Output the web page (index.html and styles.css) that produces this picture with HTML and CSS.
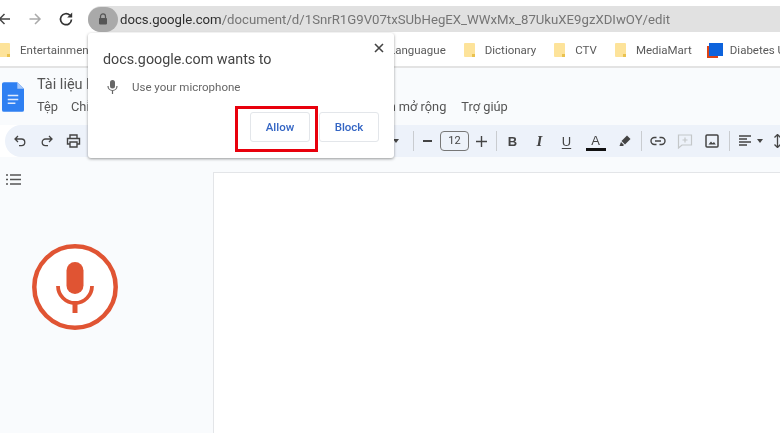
FILE: index.html
```html
<!DOCTYPE html>
<html lang="vi">
<head>
<meta charset="utf-8">
<title>Tài liệu</title>
<link rel="stylesheet" href="styles.css">
</head>
<body>
<div class="app">
  <header class="nav">
    <svg class="nav-ic" width="16" height="16" viewBox="0 0 16 16"><path d="M13 8H2.500M7.500 3 2.500 8l5 5" fill="none" stroke="#444" stroke-width="1.500"/></svg>
    <svg class="nav-ic" width="16" height="16" viewBox="0 0 16 16"><path d="M2.500 8H13M8 3l5 5-5 5" fill="none" stroke="#aaa" stroke-width="1.500"/></svg>
    <svg class="nav-ic" width="16" height="16" viewBox="0 0 16 16"><path d="M13.500 8.500A5.500 5.500 0 1 1 11.800 4.200" fill="none" stroke="#333" stroke-width="1.700"/><path d="M14.200 1.500v5h-5z" fill="#333"/></svg>
    <div class="url">
      <span class="lock"><svg width="10" height="12" viewBox="0 0 10 12"><path d="M2.500 5V3.400a2.500 2.500 0 0 1 5 0V5" fill="none" stroke="#555" stroke-width="1.200"/><rect x="1" y="5" width="8" height="6.400" rx=".8" fill="#555"/></svg></span>
      <span class="url-text"><span class="host">docs.google.com</span>/document/d/1SnrR1G9V07txSUbHegEX_WWxMx_87UkuXE9gzXDIwOY/edit</span>
    </div>
  </header>

  <nav class="bookmarks">
    <span class="bm bm-first"><i class="folder"></i>Entertainment</span>
    <span class="bm"><i class="folder"></i>Languague</span>
    <span class="bm"><i class="folder"></i>Dictionary</span>
    <span class="bm"><i class="folder"></i>CTV</span>
    <span class="bm"><i class="folder"></i>MediaMart</span>
    <span class="bm bm-last"><svg class="bm-logo" width="16" height="15" viewBox="0 0 16 15"><rect x="0" y="3" width="11" height="12" fill="#dc4316"/><rect x="2" y="0" width="14" height="13" fill="#0d63dc"/></svg>Diabetes UK</span>
  </nav>

  <section class="docs-head">
    <svg class="docs-logo" width="22" height="30" viewBox="0 0 23 31"><path d="M2 0h14l7 7v22a2 2 0 0 1-2 2H2a2 2 0 0 1-2-2V2a2 2 0 0 1 2-2z" fill="#2f80f2"/><path d="M16 0v7h7z" fill="#a9c8f8"/><path d="M6 14h11M6 18h11M6 22h8" stroke="#dfeafd" stroke-width="1.600"/></svg>
    <div class="docs-titles">
      <div class="doc-title">Tài liệu không có tiêu đề</div>
      <div class="menu">
        <span class="m-tep">Tệp</span><span class="m-ch">Chỉnh sửa</span><span class="m-ext">Tiện ích mở rộng</span><span class="m-help">Trợ giúp</span>
      </div>
    </div>
  </section>

  <section class="toolbar">
    <span class="tb"><svg width="14" height="14" viewBox="0 0 14 14"><path d="M5 2 2 5l3 3M2 5h6.500a3.300 3.300 0 0 1 0 6.600H6" fill="none" stroke="#444" stroke-width="1.300"/></svg></span>
    <span class="tb"><svg width="14" height="14" viewBox="0 0 14 14"><path d="m9 2 3 3-3 3M12 5H5.500a3.300 3.300 0 0 0 0 6.600H8" fill="none" stroke="#444" stroke-width="1.300"/></svg></span>
    <span class="tb"><svg width="15" height="14" viewBox="0 0 15 14"><path d="M4 4V1h7v3M4 10H1.500V4.500h12V10H11M4 8h7v5H4z" fill="none" stroke="#444" stroke-width="1.400"/></svg></span>
    <span class="tb-caret caret"></span>
    <span class="sep"></span>
    <span class="tb tb-minus"><span class="minus"></span></span>
    <span class="size">12</span>
    <span class="tb plus-wrap"><svg width="11" height="11" viewBox="0 0 11 11"><path d="M5.500 0v11M0 5.500h11" stroke="#444" stroke-width="1.400"/></svg></span>
    <span class="sep"></span>
    <span class="tb fmt bold">B</span>
    <span class="tb fmt ital">I</span>
    <span class="tb fmt under">U</span>
    <span class="tb fmt color"><span class="color-a">A</span></span>
    <span class="tb"><svg width="14" height="14" viewBox="0 0 14 14"><path d="M9 1.500 12.500 5 7 10.500 3.500 7z" fill="#444"/><path d="M3 8l3 3-1 1H1.500z" fill="#444"/></svg></span>
    <span class="sep"></span>
    <span class="tb"><svg width="16" height="10" viewBox="0 0 16 10"><path d="M6.500 1.500H4.500a3.500 3.500 0 0 0 0 7h2M9.500 1.500h2a3.500 3.500 0 0 1 0 7h-2M5 5h6" fill="none" stroke="#444" stroke-width="1.400"/></svg></span>
    <span class="tb"><svg width="16" height="15" viewBox="0 0 16 15"><path d="M1.500 1h13v10H5l-3.500 3zM8 3.500v5M5.500 6h5" fill="none" stroke="#c4c7c9" stroke-width="1.200"/></svg></span>
    <span class="tb"><svg width="14" height="14" viewBox="0 0 14 14"><rect x="1" y="1" width="12" height="12" rx="1" fill="none" stroke="#444" stroke-width="1.500"/><path d="m3.500 10.500 2.500-3 1.500 1.800 1.500-1.300 1.800 2.500z" fill="#444"/></svg></span>
    <span class="sep sep-last"></span>
    <span class="tb align"><svg width="13" height="12" viewBox="0 0 13 12"><path d="M0 1h12M0 4h8M0 7h12M0 10h8" stroke="#444" stroke-width="1.300"/></svg><span class="caret"></span></span>
    <span class="tb"><svg width="9" height="14" viewBox="0 0 9 14"><path d="M4.500 1v12M1.500 3.500l3-3 3 3M1.500 10.500l3 3 3-3" fill="none" stroke="#444" stroke-width="1.300"/></svg></span>
  </section>

  <main class="workspace">
    <aside class="outline">
      <svg class="outline-ic" width="17" height="13" viewBox="0 0 17 13"><path d="M5 2h11M5 6.500h11M5 11h11" stroke="#555" stroke-width="1.500"/><path d="M1 2h2M1 6.500h2M1 11h2" stroke="#555" stroke-width="1.500"/></svg>
      <svg class="big-mic" width="86" height="86" viewBox="0 0 86 86"><circle cx="43" cy="43" r="40.700" fill="#fff" stroke="#e05433" stroke-width="4.500"/><rect x="34.500" y="18" width="17" height="32" rx="8.500" fill="#e05433"/><path d="M26 42a17 17 0 0 0 34 0" fill="none" stroke="#e05433" stroke-width="3.800"/><path d="M43 59v10" stroke="#e05433" stroke-width="5"/></svg>
    </aside>
    <div class="page"></div>
  </main>

  <div class="popup">
    <svg class="close" width="10" height="10" viewBox="0 0 10 10"><path d="m1 1 8 8M9 1 1 9" stroke="#444" stroke-width="1.600"/></svg>
    <h1 class="pop-title">docs.google.com wants to</h1>
    <div class="pop-row">
      <svg width="11" height="14" viewBox="0 0 11 14"><rect x="3" y="0" width="5" height="8.500" rx="2.500" fill="#666"/><path d="M1 6a4.500 4.500 0 0 0 9 0M5.500 10.500V14" fill="none" stroke="#666" stroke-width="1.200"/></svg>
      <span>Use your microphone</span>
    </div>
    <div class="pop-actions">
      <span class="btn btn-allow">Allow</span>
      <span class="btn btn-block">Block</span>
    </div>
    <span class="highlight"></span>
  </div>
</div>
</body>
</html>
```

FILE: styles.css
```css
* { box-sizing: border-box; }
html, body { margin: 0; padding: 0; background: #fff; }
.app {
  position: relative;
  width: 780px;
  height: 433px;
  overflow: hidden;
  font-family: Roboto, "Open Sans", sans-serif;
  color: #555;
  filter: blur(.4px);
  display: flex;
  flex-direction: column;
}

/* browser bar */
.nav { height: 33px; flex: none; display: flex; align-items: center; gap: 14.500px; padding: 6px 0 1px; margin-left: -3.500px; }
.nav-ic { flex: none; }
.url { flex: 1; height: 26px; background: #e1e1e1; border-radius: 13px 0 0 13px; display: flex; align-items: center; }
.lock { width: 30px; height: 25px; margin-right: 2px; flex: none; background: #a9a9a9; border-radius: 13px; display: flex; align-items: center; justify-content: center; }
.url-text { font-size: 13.200px; color: #757575; white-space: nowrap; }
.host { color: #2e2e2e; }

/* bookmarks */
.bookmarks { height: 35px; flex: none; display: flex; align-items: center; gap: 18px; border-bottom: 2px solid #e3e3e3; font-size: 11.500px; color: #5a5a5a; white-space: nowrap; padding-top: 1px; margin-left: -1px; }
.bm { display: flex; align-items: center; }
.folder { position: relative; display: block; width: 11px; height: 14px; margin-right: 10px; background: #fde39a; border-radius: 1px; }
.folder::after { content: ""; position: absolute; right: 0; bottom: 0; width: 3px; height: 3px; background: #eac24f; }
.bm-first { width: 351px; flex: none; }
.bm-last { margin-left: -3px; }
.bm-logo { margin-right: 7px; flex: none; }

/* docs header */
.docs-head { height: 57px; flex: none; display: flex; background: #f9fbfd; padding: 7px 0 0 2px; }
.docs-logo { flex: none; margin-top: 7px; }
.docs-titles { margin-left: 13px; }
.doc-title { width: 51px; overflow: hidden; white-space: nowrap; font-size: 14.500px; line-height: 20px; color: #555; }
.menu { font-size: 12.800px; line-height: 18px; margin-top: 3px; color: #555; display: flex; white-space: nowrap; }
.m-ch { margin-left: 13px; width: 17px; overflow: hidden; }
.m-ext { margin-left: 263px; }
.m-help { margin-left: 15px; }

/* toolbar */
.toolbar { height: 32px; flex: none; margin-left: 5px; background: #edf2fa; border-radius: 16px 0 0 16px; display: flex; align-items: center; padding-left: 1px; overflow: hidden; }
.tb { width: 27px; height: 27px; flex: none; display: flex; align-items: center; justify-content: center; }
.tb-caret { margin-left: 306px; margin-right: 10.500px; flex: none; }
.caret { display: block; width: 0; height: 0; border: 3.500px solid transparent; border-top: 4px solid #444; border-bottom: 0; }
.sep { width: 1px; height: 20px; background: #c9ccd0; flex: none; margin: 0 2px 0 3px; }
.tb-minus { width: 23px; }
.minus { width: 9px; height: 1.500px; background: #444; display: block; }
.size { width: 29px; height: 20px; flex: none; border: 1px solid #777; border-radius: 4px; font-size: 11px; line-height: 18px; text-align: center; color: #444; margin-left: 1.500px; }
.plus-wrap { width: 24px; }
.fmt { font-family: "Liberation Sans", sans-serif; font-size: 13px; color: #444; }
.bold { font-weight: 700; }
.ital { font-family: "Liberation Serif", serif; font-style: italic; font-weight: 700; font-size: 15px; }
.under { text-decoration: underline; text-underline-offset: 2px; }
.color { width: 31px; }
.color-a { display: block; width: 20px; line-height: 14px; text-align: center; border-bottom: 3px solid #111; margin-top: 2px; }
.sep-last { margin-left: 4px; }
.align { gap: 5px; width: 32px; justify-content: flex-start; padding-left: 7px; }

/* workspace */
.workspace { flex: 1; background: #f9fbfd; display: flex; min-height: 0; padding-top: 15px; }
.outline { width: 213px; flex: none; padding: 1px 0 0 5px; display: flex; flex-direction: column; }
.outline-ic { flex: none; }
.big-mic { flex: none; margin: 58px 0 0 26.500px; }
.page { flex: 1; background: #fff; border: 1px solid #e3e5e8; border-right: 0; border-bottom: 0; }

/* permission popup */
.popup { position: absolute; left: 88px; top: 33px; width: 306px; height: 125px; background: #fff; border-radius: 3px; box-shadow: 0 1px 3px rgba(0,0,0,.4); padding: 15px 15px 0; }
.close { position: absolute; right: 10px; top: 10px; }
.pop-title { margin: 0; font-size: 14.300px; line-height: 22px; font-weight: 400; color: #444; }
.pop-row { display: flex; align-items: center; margin-top: 10px; font-size: 11.500px; line-height: 14px; color: #666; }
.pop-row svg { margin: 0 14px 0 4px; flex: none; }
.pop-actions { display: flex; justify-content: flex-end; gap: 9px; margin-top: 18px; }
.btn { height: 30px; display: flex; align-items: center; justify-content: center; border: 1px solid #e3e6ea; border-radius: 3px; color: #3566c4; font-size: 11.500px; font-weight: 500; }
.btn-allow { width: 60px; }
.btn-block { width: 60px; }
.highlight { position: absolute; left: 147px; top: 73px; width: 83px; height: 46px; border: 3px solid #e8000c; pointer-events: none; }
```
